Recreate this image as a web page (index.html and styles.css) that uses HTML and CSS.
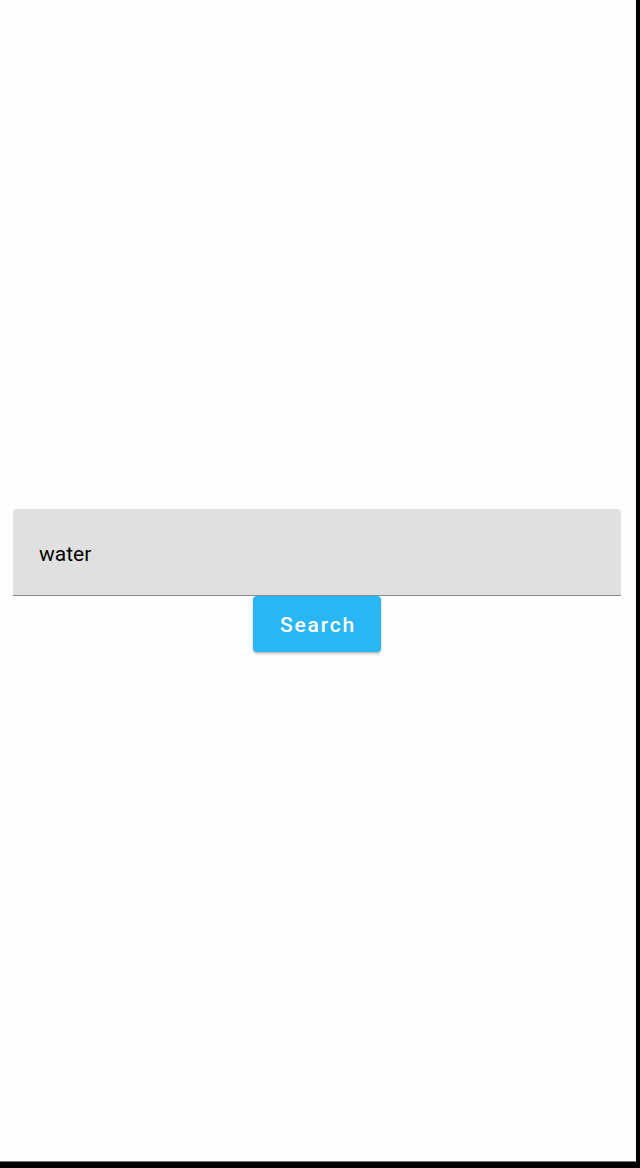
FILE: index.html
```html
<!DOCTYPE html>
<html>
<head>
<meta charset="utf-8">
<link rel="stylesheet" href="styles.css">
</head>
<body>
<div class="screen">
  <div class="form">
    <div class="field"><span class="value">water</span></div>
    <button class="btn">Search</button>
  </div>
</div>
</body>
</html>
```
FILE: styles.css
```css
html, body {
  margin: 0;
  padding: 0;
  background: #000;
}
.screen {
  width: 636px;
  height: 1161px;
  background: #fefefe;
  border-bottom: 1px solid #777;
  display: flex;
  flex-direction: column;
  justify-content: center;
  font-family: Roboto, "Liberation Sans", sans-serif;
}
.form {
  display: flex;
  flex-direction: column;
  align-items: center;
  padding: 0 15px 0 13px;
}
.field {
  align-self: stretch;
  height: 87px;
  background: #e0e0e0;
  border-radius: 4px 4px 0 0;
  border-bottom: 1px solid #8c8c8c;
  display: flex;
  align-items: center;
  padding-left: 26px;
  padding-top: 3px;
  box-sizing: border-box;
}
.value {
  font-size: 21px;
  color: #000;
}
.btn {
  width: 128px;
  height: 56px;
  border: none;
  border-radius: 4px;
  background: #29b6f6;
  color: #fff;
  font-family: Roboto, "Liberation Sans", sans-serif;
  font-size: 21px;
  font-weight: 500;
  letter-spacing: 1.8px;
  box-shadow: 0 2px 3px rgba(0,0,0,0.2), 0 1px 1px rgba(0,0,0,0.1);
  padding: 2px 0 0 2px;
}
```
